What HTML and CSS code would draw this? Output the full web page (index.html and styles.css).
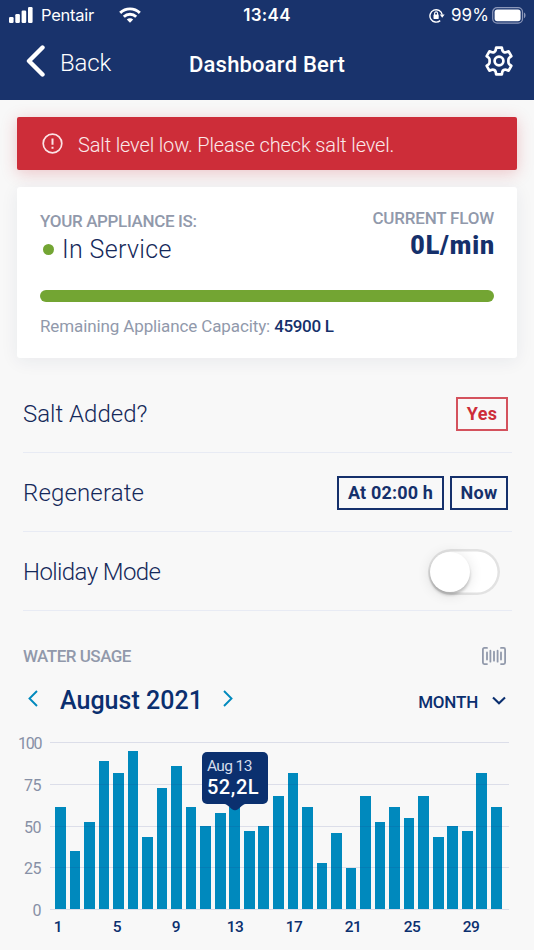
FILE: index.html
```html
<!DOCTYPE html>
<html lang="en">
	<head>
		<meta charset="utf-8">
		<title>Dashboard Bert</title>
		<link rel="stylesheet" href="styles.css">
	</head>

	<body>
		<header class="header">
			<!--Phone status bar-->
			<div class="status">
				<div class="status-left">
					<svg class="signal" width="24" height="16" viewBox="0 0 24 16" fill="#fff">
						<rect x="0" y="10" width="4.6" height="6" rx="1.2"/>
						<rect x="6.3" y="7" width="4.6" height="9" rx="1.2"/>
						<rect x="12.6" y="3.5" width="4.6" height="12.5" rx="1.2"/>
						<rect x="19" y="0" width="4.6" height="16" rx="1.2"/>
					</svg>
					<span class="carrier">Pentair</span>
					<svg class="wifi" width="22" height="16" viewBox="0 0 22 16" fill="none" stroke="#fff" stroke-width="2.9">
						<path d="M1.2 5.9a14 14 0 0 1 19.6 0"/>
						<path d="M4.8 9.7a9 9 0 0 1 12.4 0"/>
						<path d="M11 15.8l-3.2-3.3a4.6 4.6 0 0 1 6.4 0z" fill="#fff" stroke="none"/>
					</svg>
				</div>
				<span class="clock">13:44</span>
				<div class="status-right">
					<svg class="lock" width="16" height="15" viewBox="0 0 16 15" fill="none" stroke="#fff" stroke-width="1.4">
						<path d="M11.2 12.6A6.2 6.2 0 1 1 13.2 6.6"/>
						<path d="M10.8 6.6h4.8l-2.4 3.2z" fill="#fff" stroke="none"/>
						<rect x="4.5" y="6.5" width="5.2" height="4.4" rx=".6" fill="#fff" stroke="none"/>
						<path d="M5.6 7V5.4a1.5 1.5 0 0 1 3 0V7" stroke-width="1.1"/>
					</svg>
					<span class="percent">99%</span>
					<svg class="battery" width="34" height="17" viewBox="0 0 34 17">
						<rect x=".7" y=".7" width="29.8" height="15.4" rx="4.4" fill="none" stroke="#8c98ba" stroke-width="1.2"/>
						<rect x="2.6" y="2.6" width="26" height="11.6" rx="2.6" fill="#fff"/>
						<path d="M32 5.6c2 .8 2 4.8 0 5.6z" fill="#8c98ba"/>
					</svg>
				</div>
			</div>
			<!--Title bar-->
			<div class="titlebar">
				<div class="back">
					<svg width="20" height="34" viewBox="0 0 20 34" fill="none" stroke="#fff" stroke-width="4.4" stroke-linecap="round" stroke-linejoin="round">
						<path d="M16.5 3.5L3 17l13.5 13.5"/>
					</svg>
					<span class="back-text">Back</span>
				</div>
				<h1 class="title">Dashboard Bert</h1>
				<svg class="gear" width="30" height="30" viewBox="0 0 30 30" fill="none" stroke="#fff" stroke-width="2.7" stroke-linejoin="round">
					<path d="M12.2 1.6h5.6l.5 2.6q.3 1.200 1.400 1.800t2.300.3l2.600-.9 2.700 4.700-2 1.700q-.9.900-.9 2.200v2q0 1.300.9 2.200l2 1.700-2.700 4.700-2.600-.9q-1.200-.3-2.300.3t-1.400 1.800l-.5 2.600h-5.6l-.5-2.600q-.3-1.200-1.400-1.800t-2.300-.3l-2.600.9-2.700-4.700 2-1.700q.9-.9.900-2.200v-2q0-1.300-.9-2.200l-2-1.700 2.700-4.700 2.600.9q1.200.3 2.300-.3t1.400-1.800z"/>
					<circle cx="15" cy="15" r="4.4"/>
				</svg>
			</div>
		</header>

		<main class="content">
			<div class="alert">
				<svg width="21" height="21" viewBox="0 0 21 21" fill="none" stroke="#fbe3e5" stroke-width="1.7">
					<circle cx="10.5" cy="10.5" r="9.3"/>
					<path d="M10.5 5.6v6.2M10.5 13.7v2" stroke-width="2"/>
				</svg>
				<span class="alert-text">Salt level low. Please check salt level.</span>
			</div>

			<!--Appliance state-->
			<section class="card">
				<div class="card-top">
					<div>
						<div class="label label-state">YOUR APPLIANCE IS:</div>
						<div class="state"><span class="dot"></span>In Service</div>
					</div>
					<div class="flow">
						<div class="label label-flow">CURRENT FLOW</div>
						<div class="flow-value">0L/min</div>
					</div>
				</div>
				<div class="progress"></div>
				<div class="capacity">Remaining Appliance Capacity: <span class="capacity-value">45900 L</span></div>
			</section>

			<!--Settings-->
			<section class="rows">
				<div class="row">
					<span class="row-name">Salt Added?</span>
					<button class="btn btn-red">Yes</button>
				</div>
				<div class="row">
					<span class="row-name regenerate">Regenerate</span>
					<div class="buttons">
						<button class="btn btn-time">At 02:00 h</button>
						<button class="btn btn-now">Now</button>
					</div>
				</div>
				<div class="row">
					<span class="row-name holiday">Holiday Mode</span>
					<div class="switch"><div class="knob"></div></div>
				</div>
			</section>

			<!--Water usage-->
			<section class="usage">
				<div class="usage-head">
					<span class="label label-usage">WATER USAGE</span>
					<svg width="24" height="18" viewBox="0 0 24 18" fill="none" stroke="#9199ab" stroke-width="1.8" stroke-linecap="round">
						<path d="M5 .9H2.4Q.9.9.9 2.4v13.2q0 1.5 1.5 1.5H5M19 .9h2.6q1.5 0 1.5 1.5v13.2q0 1.5-1.5 1.5H19"/>
						<path d="M5 5.5v7M8.4 3.7v11M12 4.7v9M15.6 3.7v11M19 5.5v7"/>
					</svg>
				</div>
				<div class="period">
					<svg width="10" height="17" viewBox="0 0 10 17" fill="none" stroke="#0089bd" stroke-width="1.9"><path d="M9 1L1.5 8.5 9 16"/></svg>
					<span class="period-name">August 2021</span>
					<svg width="10" height="17" viewBox="0 0 10 17" fill="none" stroke="#0089bd" stroke-width="1.9"><path d="M1 1l7.5 7.5L1 16"/></svg>
					<span class="month">MONTH</span>
					<svg width="14" height="9" viewBox="0 0 14 9" fill="none" stroke="#0b2f6f" stroke-width="2.1"><path d="M1 1.4l6 5.8 6-5.8"/></svg>
				</div>

				<div class="chart">
					<div class="y-axis">
						<span class="hundred">100</span><span>75</span><span>50</span><span>25</span><span>0</span>
					</div>
					<div class="plot">
						<div class="bars">
							<div class="bar" style="height:61.1%"></div>
							<div class="bar" style="height:34.9%"></div>
							<div class="bar" style="height:52.3%"></div>
							<div class="bar" style="height:88.8%"></div>
							<div class="bar" style="height:81.6%"></div>
							<div class="bar" style="height:94.4%"></div>
							<div class="bar" style="height:43%"></div>
							<div class="bar" style="height:72.2%"></div>
							<div class="bar" style="height:85.8%"></div>
							<div class="bar" style="height:61.1%"></div>
							<div class="bar" style="height:49.9%"></div>
							<div class="bar" style="height:57.2%"></div>
							<div class="bar" style="height:61.1%">
								<div class="tooltip">
									<div class="tooltip-day">Aug 13</div>
									<div class="tooltip-value">52,2L</div>
									<svg class="tooltip-tip" width="24" height="8" viewBox="0 0 24 8" fill="#0b306f"><path d="M0 0h24v.8q-3 .2-5 2L15 6.2q-3 2-6 0L5 2.8Q3 1 0 .8z"/></svg>
								</div>
							</div>
							<div class="bar" style="height:46.9%"></div>
							<div class="bar" style="height:49.9%"></div>
							<div class="bar" style="height:67.5%"></div>
							<div class="bar" style="height:81.6%"></div>
							<div class="bar" style="height:61.1%"></div>
							<div class="bar" style="height:27.7%"></div>
							<div class="bar" style="height:45.3%"></div>
							<div class="bar" style="height:24.6%"></div>
							<div class="bar" style="height:67.5%"></div>
							<div class="bar" style="height:52.4%"></div>
							<div class="bar" style="height:61.1%"></div>
							<div class="bar" style="height:54.7%"></div>
							<div class="bar" style="height:67.5%"></div>
							<div class="bar" style="height:43%"></div>
							<div class="bar" style="height:49.9%"></div>
							<div class="bar" style="height:46.9%"></div>
							<div class="bar" style="height:81.6%"></div>
							<div class="bar" style="height:61.1%"></div>
						</div>
						<!--Grid lines run over the bars-->
						<div class="lines"><i></i><i></i><i></i><i></i><i></i></div>
					</div>
					<div class="x-axis">
						<span>1</span><span>5</span><span>9</span><span>13</span><span>17</span><span>21</span><span>25</span><span>29</span>
					</div>
				</div>
			</section>
		</main>
	</body>
</html>
```
FILE: styles.css
```css
* {
	box-sizing: border-box;
}

body {
	margin: 0;
	background: #f8f8f8;
	color: #15295a;
	font-family: Roboto, "Liberation Sans", sans-serif;
	overflow: hidden;
}

svg {
	display: block;
	flex: none;
}

.header {
	height: 100px;
	background: #19336c;
	color: #fff;
}

/* status bar */
.status {
	display: grid;
	grid-template-columns: 1fr auto 1fr;
	align-items: center;
	height: 30px;
	padding: 0 9px;
	font-family: Inter, sans-serif;
	font-size: 17px;
}

.status-left, .status-right {
	display: flex;
	align-items: center;
}

.status-right {
	justify-content: flex-end;
	margin-right: -1px;
}

.signal {
	margin-top: -1px;
}

.carrier {
	margin-left: 8px;
	font-size: 16.5px;
	letter-spacing: -.26px;
}

.wifi {
	margin-left: 25px;
}

.clock {
	font-weight: 600;
	letter-spacing: .31px;
}

.percent {
	margin: 0 3px 0 6px;
	letter-spacing: .1px;
}

/* title bar */
.titlebar {
	display: grid;
	grid-template-columns: 1fr auto 1fr;
	align-items: center;
	height: 64px;
	padding: 0 20px 0 26px;
}

.back {
	display: flex;
	align-items: center;
	gap: 14px;
	margin-top: -2px;
}

.back-text {
	font-size: 24px;
	font-weight: 300;
	letter-spacing: -.15px;
	margin-top: 3px;
}

.title {
	margin: 4px 6px 0 0;
	font-size: 22px;
	font-weight: 500;
	letter-spacing: .2px;
}

.gear {
	justify-self: end;
	margin-top: -2px;
}

.content {
	padding: 17px 17px 0;
}

.alert {
	display: flex;
	align-items: center;
	gap: 15px;
	height: 53px;
	padding: 0 25px;
	border-radius: 2px;
	background: #cd2d39;
	color: #fbe9ea;
	box-shadow: 0 3px 16px rgba(205, 45, 57, .25);
}

.alert-text {
	font-size: 20px;
	font-weight: 300;
	letter-spacing: -.14px;
	margin-top: 2px;
}

.card {
	height: 171px;
	margin-top: 17px;
	padding: 21px 23px 0;
	border-radius: 3px;
	background: #fff;
	box-shadow: 0 3px 18px rgba(30, 45, 90, .07);
	position: relative;
}

.card-top {
	display: flex;
	justify-content: space-between;
	height: 82px;
}

.label {
	color: #9199ab;
	font-size: 17px;
	font-weight: 500;
	line-height: 20px;
}

.label-state {
	margin-top: 3px;
	letter-spacing: -.35px;
}

.label-flow {
	letter-spacing: -.2px;
}

.state {
	display: flex;
	align-items: center;
	margin-top: 3px;
	font-size: 25px;
	font-weight: 300;
	line-height: 32px;
	letter-spacing: .35px;
}

.dot {
	width: 11px;
	height: 11px;
	margin: -2px 8px 0 3px;
	border-radius: 50%;
	background: #73a533;
}

.flow {
	text-align: right;
}

.flow-value {
	margin-top: 2px;
	color: #15306b;
	font-size: 25px;
	font-weight: 900;
	line-height: 32px;
	letter-spacing: .9px;
	margin-right: -1px;
}

.progress {
	height: 12px;
	border-radius: 6px;
	background: #73a533;
}

.capacity {
	margin-top: 13px;
	color: #9199ab;
	font-size: 17px;
	line-height: 22px;
	letter-spacing: -.12px;
}

.capacity-value {
	color: #15306b;
	font-weight: 500;
	letter-spacing: -.34px;
}

/* rows */
.rows {
	margin: 16px 5px 0 6px;
}

.row {
	display: flex;
	align-items: center;
	justify-content: space-between;
	height: 79px;
	padding: 1px 4px 0 0;
	border-bottom: 1px solid #e8ebf4;
}

.row-name {
	margin-top: 1px;
	font-size: 24px;
	font-weight: 300;
}

.regenerate {
	letter-spacing: .15px;
}

.holiday {
	letter-spacing: -.6px;
}

.buttons {
	display: flex;
	gap: 6px;
}

.btn {
	width: 52px;
	height: 34px;
	padding: 0 0 1px;
	border: 2px solid #15306b;
	background: #f8f8f8;
	color: #15306b;
	font: 700 18px Roboto, sans-serif;
	letter-spacing: .3px;
}

.btn-red {
	border-color: #d4525d;
	color: #cd2d39;
}

.btn-time {
	width: 107px;
	letter-spacing: .18px;
}

.btn-now {
	width: 58px;
}

.switch {
	width: 72px;
	height: 46px;
	margin-right: 8px;
	padding: 3px;
	border-radius: 23px;
	background: #fff;
	box-shadow: inset 0 0 0 2.5px #e2e2e2;
}

.knob {
	width: 40px;
	height: 40px;
	margin-left: -1px;
	border-radius: 50%;
	background: #fff;
	box-shadow: 0 3px 3px rgba(0, 0, 0, .2), 0 2px 14px rgba(0, 0, 0, .12);
}

/* water usage */
.usage {
	margin: 0 5px 0 1px;
}

.usage-head {
	display: flex;
	align-items: center;
	justify-content: space-between;
	height: 20px;
	margin: 35px 6px 0 5px;
}

.label-usage {
	letter-spacing: -.5px;
}

.period {
	display: flex;
	align-items: center;
	height: 30px;
	margin: 18px 6px 0 10px;
	color: #0b2f6f;
}

.period svg {
	margin-top: -2px;
}

.period-name {
	margin: 3px 20px 0 22px;
	font-size: 25px;
	font-weight: 500;
	letter-spacing: .03px;
}

.month {
	margin: 5px 14px 0 auto;
	font-size: 17px;
	font-weight: 500;
	letter-spacing: -.2px;
}

.period svg:last-child {
	margin-top: 3px;
}

.chart {
	display: grid;
	grid-template-columns: 24px 459px;
	column-gap: 8px;
	margin-top: 28px;
}

.y-axis {
	display: flex;
	flex-direction: column;
	justify-content: space-between;
	height: 187px;
	margin: -8px 1px -12px 0;
	text-align: right;
	color: #8790a6;
	font-size: 16px;
	line-height: 20px;
	letter-spacing: -.5px;
}

.hundred {
	letter-spacing: -1.2px;
}

.plot {
	position: relative;
	height: 168px;
}

.bars {
	display: flex;
	align-items: flex-end;
	justify-content: space-between;
	height: 167px;
	padding: 0 7px 0 5px;
}

.bar {
	position: relative;
	width: 10.7px;
	background: #0089bd;
}

.lines {
	position: absolute;
	top: 0;
	left: 0;
	right: 0;
	height: 168px;
	display: flex;
	flex-direction: column;
	justify-content: space-between;
}

.lines i {
	height: 1px;
	background: rgba(30, 50, 130, .13);
}

.tooltip {
	position: absolute;
	z-index: 1;
	left: -27.5px;
	bottom: 105px;
	width: 66px;
	height: 52px;
	padding: 5px 0 0 5px;
	border-radius: 5px;
	background: #0b306f;
	color: #fff;
}

.tooltip-day {
	color: #d5dceb;
	font-size: 15.5px;
	line-height: 19px;
	letter-spacing: -.6px;
}

.tooltip-value {
	font-size: 20px;
	font-weight: 500;
	line-height: 22px;
	letter-spacing: .6px;
}

.tooltip-tip {
	position: absolute;
	left: 21px;
	top: 51px;
}

.x-axis {
	grid-column: 2;
	display: flex;
	justify-content: space-between;
	margin: 7px 0 0 -2px;
	padding: 0 28px 0 0;
	color: #0b306f;
	font-size: 15.5px;
	font-weight: 500;
	line-height: 20px;
	letter-spacing: -.5px;
}

.x-axis span {
	width: 20px;
	text-align: center;
}
```
